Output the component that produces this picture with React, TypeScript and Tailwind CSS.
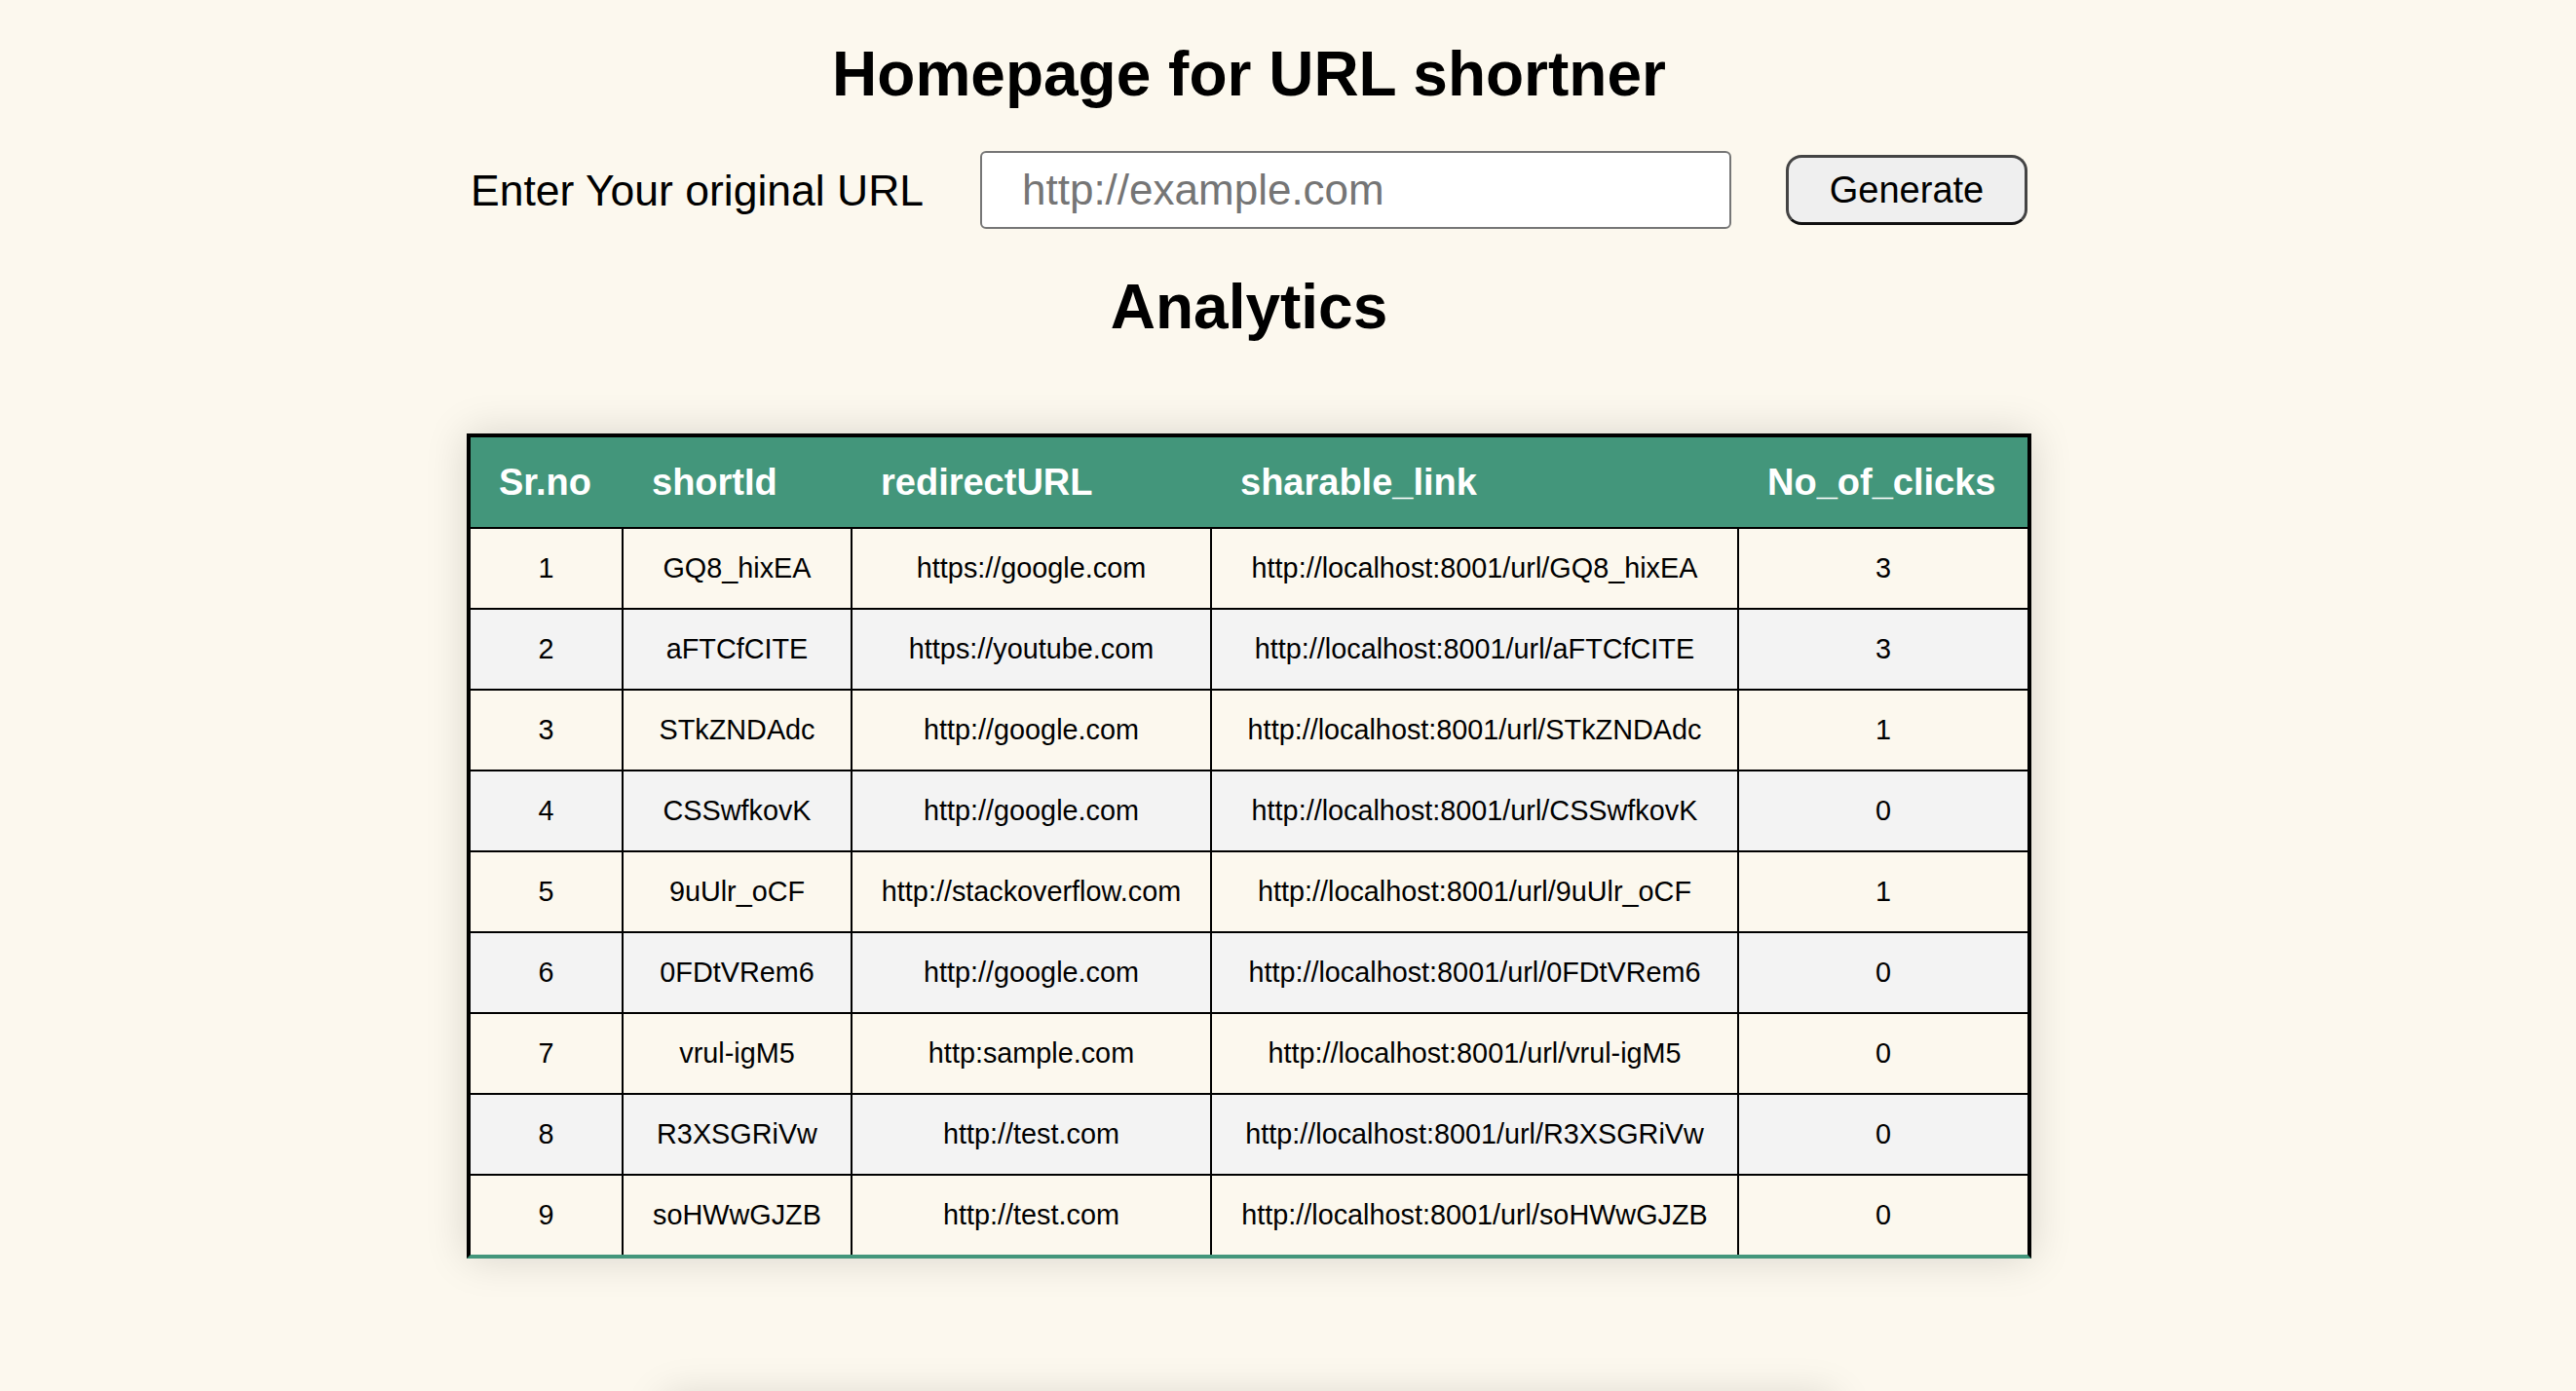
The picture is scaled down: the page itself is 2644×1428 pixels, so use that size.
import React from "react";

type Row = {
  id: number;
  shortId: string;
  redirectURL: string;
  clicks: number;
};

const rows: Row[] = [
  { id: 1, shortId: "GQ8_hixEA", redirectURL: "https://google.com", clicks: 3 },
  { id: 2, shortId: "aFTCfCITE", redirectURL: "https://youtube.com", clicks: 3 },
  { id: 3, shortId: "STkZNDAdc", redirectURL: "http://google.com", clicks: 1 },
  { id: 4, shortId: "CSSwfkovK", redirectURL: "http://google.com", clicks: 0 },
  { id: 5, shortId: "9uUlr_oCF", redirectURL: "http://stackoverflow.com", clicks: 1 },
  { id: 6, shortId: "0FDtVRem6", redirectURL: "http://google.com", clicks: 0 },
  { id: 7, shortId: "vrul-igM5", redirectURL: "http:sample.com", clicks: 0 },
  { id: 8, shortId: "R3XSGRiVw", redirectURL: "http://test.com", clicks: 0 },
  { id: 9, shortId: "soHWwGJZB", redirectURL: "http://test.com", clicks: 0 },
];

const headers = ["Sr.no", "shortId", "redirectURL", "sharable_link", "No_of_clicks"];

// same column track for header and body rows
const cols = "grid grid-cols-[157px_235px_369px_541px_296px]";

const App = () => {
  return (
    <div className="flex h-screen flex-col items-center overflow-hidden bg-[#fcf8ee] pr-[80px] font-['Liberation_Sans',Arial,sans-serif] text-black">
      <h1 className="mt-[39px] text-[64px] font-bold leading-[74px]">Homepage for URL shortner</h1>

      {/* url form */}
      <form className="mt-[42px] flex items-center gap-[56px]" onSubmit={(e) => e.preventDefault()}>
        <label htmlFor="url" className="w-[467px] whitespace-nowrap text-[44.5px] leading-[51px]">
          Enter Your original URL
        </label>
        <input
          id="url"
          type="text"
          placeholder="http://example.com"
          className="h-[80px] w-[771px] rounded-[6px] border-2 border-[#767676] bg-white px-[41px] text-[44px] outline-none placeholder:text-[#757575]"
        />
        <button
          type="submit"
          className="h-[72px] w-[248px] rounded-[16px] border-[3px] border-[#444] border-b-[#111] bg-[#efefef] text-[38px] leading-none"
        >
          Generate
        </button>
      </form>

      <h1 className="mt-[43px] text-[64px] font-bold leading-[74px]">Analytics</h1>

      {/* analytics table */}
      <div className="mt-[93px] w-[1606px] border-x-4 border-t-4 border-b-4 border-black border-b-[#43967b] shadow-[0_0_40px_rgba(0,0,0,0.15)]">
        <div className={`${cols} h-[94px] border-b-2 border-black bg-[#43967b] text-[38px] font-bold text-white`}>
          {headers.map((h) => (
            <div key={h} className="flex items-center px-[29px]">
              {h}
            </div>
          ))}
        </div>
        {rows.map((r, i) => {
          const cells = [
            String(r.id),
            r.shortId,
            r.redirectURL,
            `http://localhost:8001/url/${r.shortId}`,
            String(r.clicks),
          ];
          const last = i === rows.length - 1;
          return (
            <div
              key={r.id}
              className={`${cols} ${last ? "h-[81px]" : "h-[83px] border-b-2 border-black"} ${
                i % 2 === 1 ? "bg-[#f3f3f3]" : ""
              } text-[28.8px]`}
            >
              {cells.map((c, j) => (
                <div
                  key={j}
                  className={`flex items-center justify-center ${j < 4 ? "border-r-2 border-black" : ""}`}
                >
                  {c}
                </div>
              ))}
            </div>
          );
        })}
      </div>

      {/* next section, only its shadow shows above the fold */}
      <div className="mt-[142px] h-[200px] w-[1200px] shrink-0 shadow-[0_0_40px_rgba(0,0,0,0.15)]" />
    </div>
  );
};

export default App;
